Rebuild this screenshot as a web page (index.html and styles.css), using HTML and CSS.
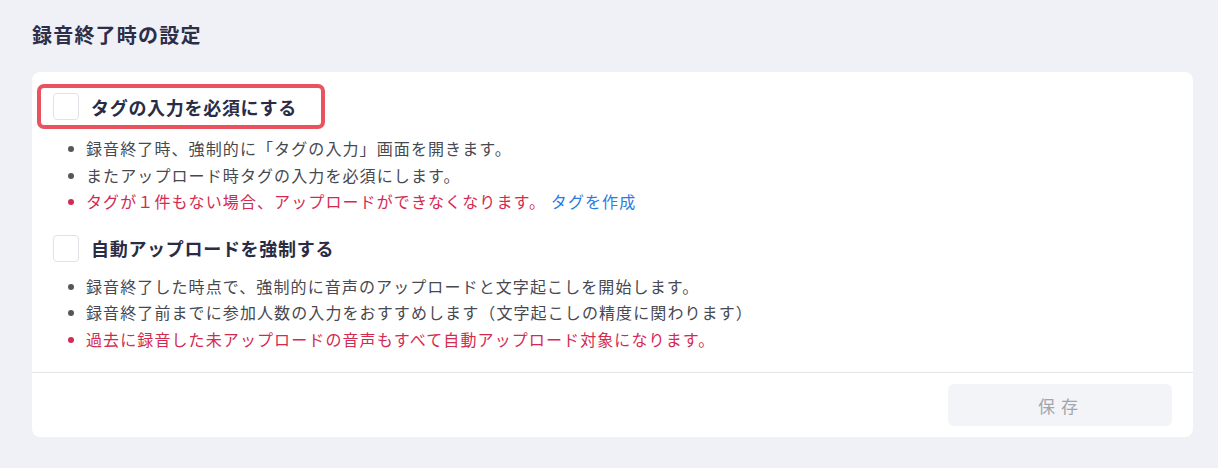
FILE: index.html
```html
<!DOCTYPE html>
<html lang="ja">
<head>
  <meta charset="UTF-8" />
  <title>録音終了時の設定</title>
  <link rel="stylesheet" href="styles.css">
</head>
<body>
  <h2 class="page-title">録音終了時の設定</h2>

  <div class="card">
    <div class="card-body">
      <label class="option highlight">
        <span class="checkbox"></span>
        <span class="option-label">タグの入力を必須にする</span>
      </label>
      <ul class="notes">
        <li>録音終了時、強制的に「タグの入力」画面を開きます。</li>
        <li>またアップロード時タグの入力を必須にします。</li>
        <li class="warn">タグが１件もない場合、アップロードができなくなります。 <a href="#">タグを作成</a></li>
      </ul>

      <label class="option">
        <span class="checkbox"></span>
        <span class="option-label">自動アップロードを強制する</span>
      </label>
      <ul class="notes">
        <li>録音終了した時点で、強制的に音声のアップロードと文字起こしを開始します。</li>
        <li>録音終了前までに参加人数の入力をおすすめします（文字起こしの精度に関わります）</li>
        <li class="warn">過去に録音した未アップロードの音声もすべて自動アップロード対象になります。</li>
      </ul>
    </div>

    <div class="card-footer">
      <button class="save-btn" disabled>保存</button>
    </div>
  </div>
</body>
</html>
```

FILE: styles.css
```css
* { box-sizing: border-box; }

body {
  margin: 0;
  padding: 22px 25px 0 32px;
  font-family: "Noto Sans CJK JP", "Noto Sans", sans-serif;
  background-color: #f0f1f6;
  color: #2b2d47;
}

.page-title {
  margin: 0 0 24px;
  font-size: 20px;
  font-weight: bold;
  line-height: 26px;
  letter-spacing: 1.2px;
  color: #2c2e4a;
}

.card {
  background: white;
  border-radius: 8px;
}

.card-body {
  padding: 12px 21px 20px 5px;
}

/* オプション行 */
.option {
  display: inline-flex;
  align-items: center;
  padding: 5px 24px 5px 16px;
  cursor: pointer;
}

.option.highlight {
  border: 4px solid #e9525f;
  border-radius: 7px;
  padding: 5px 24px 5px 12px;
}

.checkbox {
  width: 26px;
  height: 27px;
  border: 1px solid #e1e2e8;
  border-radius: 4px;
  background: white;
  margin-right: 12px;
}

.option-label {
  font-size: 18px;
  font-weight: bold;
  letter-spacing: 0.7px;
  color: #2a2c45;
}

.notes {
  list-style: none;
  margin: 6px 0 15px;
  padding: 0 0 0 31px;
}

.notes:last-child {
  margin-bottom: 0;
}

.notes li {
  position: relative;
  padding-left: 18px;
  font-size: 16px;
  line-height: 26.5px;
  letter-spacing: 1.1px;
  color: #474850;
}

.notes li::before {
  content: "";
  position: absolute;
  left: 0;
  top: 11px;
  width: 6px;
  height: 6px;
  border-radius: 50%;
  background: #55565c;
}

.notes li.warn {
  color: #d42a50;
}

.notes li.warn::before {
  background: #d42a50;
}

.notes a {
  color: #2c7be5;
  text-decoration: none;
}

/* フッター */
.card-footer {
  border-top: 1px solid #e6e6ea;
  padding: 11px 21px 11px;
  display: flex;
  justify-content: flex-end;
}

.save-btn {
  width: 224px;
  height: 42px;
  border: none;
  border-radius: 6px;
  background: #f3f4f8;
  color: #a3a5ae;
  font-family: inherit;
  font-size: 17px;
  letter-spacing: 6px;
  padding-left: 8px;
}
```
